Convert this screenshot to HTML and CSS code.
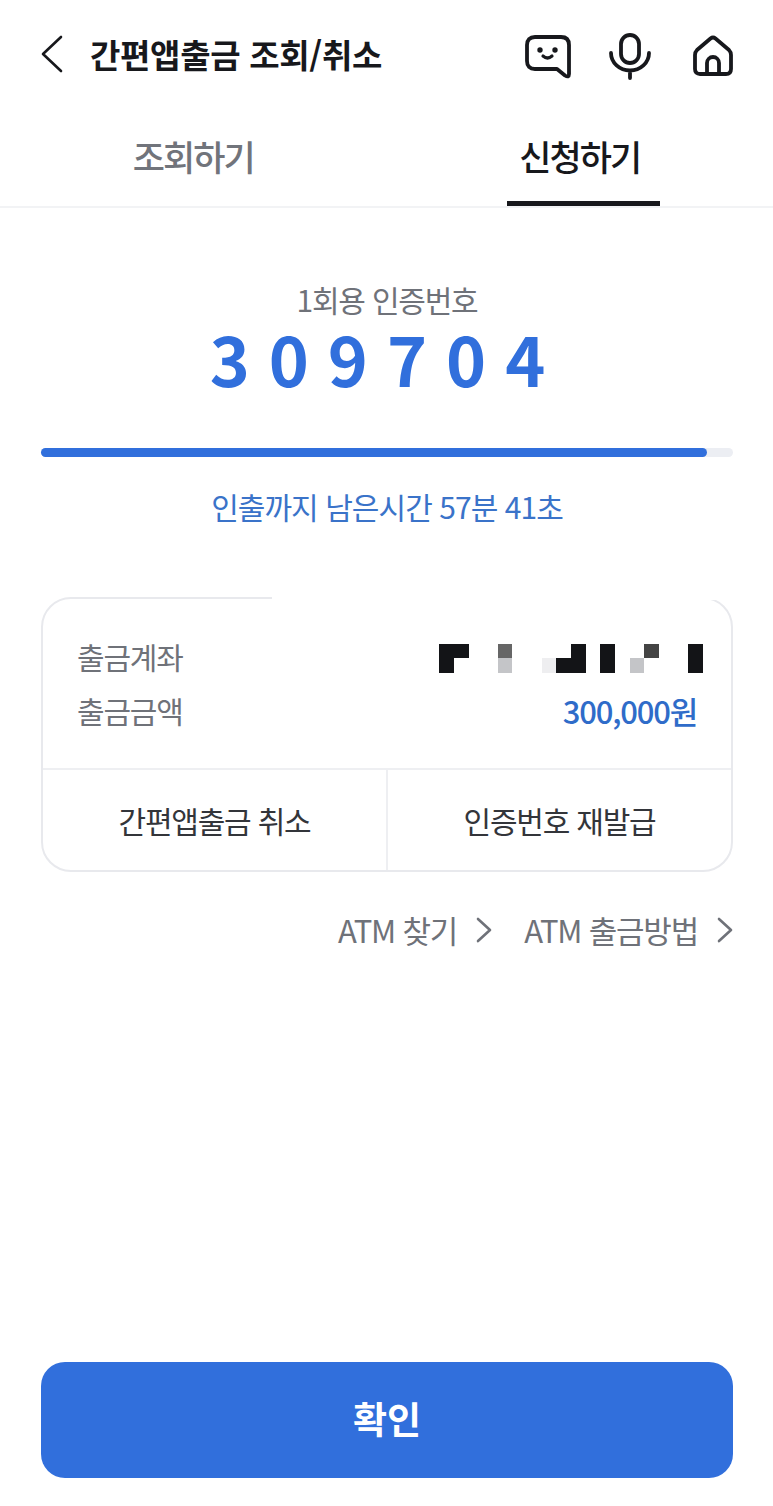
FILE: index.html
```html
<!DOCTYPE html>
<html lang="ko">
<head>
  <meta charset="UTF-8" />
  <meta name="viewport" content="width=device-width, initial-scale=1.0"/>
  <title>간편앱출금 조회/취소</title>
  <link rel="stylesheet" href="styles.css">
</head>
<body>
  <div class="page">

    <!-- Header -->
    <header class="top-bar">
      <svg class="back-icon" viewBox="0 0 24 38" width="24" height="38">
        <path d="M21 2 L3 19 L21 36" fill="none" stroke="#17181c" stroke-width="2.6" stroke-linecap="round" stroke-linejoin="round"/>
      </svg>
      <h1 class="page-title">간편앱출금 조회/취소</h1>
      <div class="top-icons">
        <svg viewBox="0 0 48 52" width="48" height="52">
          <path d="M11 9 H37 Q45 9 45 17 V46 Q45 50 41 47.5 L33 41 H11 Q3 41 3 33 V17 Q3 9 11 9 Z" fill="none" stroke="#17181c" stroke-width="3.8" stroke-linejoin="round"/>
          <circle cx="16" cy="22" r="2.7" fill="#17181c"/>
          <circle cx="31" cy="22" r="2.7" fill="#17181c"/>
          <path d="M19 28 Q23.5 32 28 28" fill="none" stroke="#17181c" stroke-width="3.2" stroke-linecap="round"/>
        </svg>
        <svg viewBox="0 0 48 52" width="48" height="52">
          <rect x="13" y="7" width="18" height="28" rx="9" fill="none" stroke="#17181c" stroke-width="3.8"/>
          <path d="M3 25 A19 17.5 0 0 0 41 25 M22 43 V50" fill="none" stroke="#17181c" stroke-width="3.8" stroke-linecap="round"/>
        </svg>
        <svg viewBox="0 0 42 52" width="42" height="52">
          <path d="M18.5 10.5 Q21 8.5 23.5 10.5 L37 22 Q39 24 39 27 V41 Q39 46 34 46 H8 Q3 46 3 41 V27 Q3 24 5 22 Z" fill="none" stroke="#17181c" stroke-width="3.8" stroke-linejoin="round"/>
          <path d="M15 46 V35 A6 6 0 0 1 27 35 V46" fill="none" stroke="#17181c" stroke-width="3.8"/>
        </svg>
      </div>
    </header>

    <!-- Tabs -->
    <nav class="tabs">
      <div class="tab">조회하기</div>
      <div class="tab tab-active">신청하기</div>
    </nav>

    <main class="content">
      <p class="code-label">1회용 인증번호</p>
      <p class="code-number">309704</p>

      <div class="progress"><div class="progress-fill" style="width: 96.2%"></div></div>
      <p class="time-left">인출까지 남은시간 57분 41초</p>

      <section class="card">
        <div class="card-gap"></div>
        <div class="card-info">
          <div class="info-row">
            <span class="info-label">출금계좌</span>
            <div class="mosaic">
              <i class="d"></i><i class="d"></i><i></i><i></i><i class="m"></i><i></i><i></i><i></i><i></i><i class="d"></i><i></i><i class="d"></i><i></i><i></i><i class="g"></i><i></i><i></i><i class="d"></i>
              <i class="d"></i><i></i><i></i><i></i><i class="l"></i><i></i><i></i><i class="f"></i><i class="d"></i><i class="d"></i><i></i><i class="d"></i><i></i><i class="l"></i><i></i><i></i><i></i><i class="d"></i>
            </div>
          </div>
          <div class="info-row">
            <span class="info-label">출금금액</span>
            <span class="info-amount">300,000원</span>
          </div>
        </div>
        <div class="card-actions">
          <div class="card-action">간편앱출금 취소</div>
          <div class="card-action">인증번호 재발급</div>
        </div>
      </section>

      <div class="links">
        <span class="link">ATM 찾기
          <svg viewBox="0 0 16 26" width="16" height="26"><path d="M2 2 L14 13 L2 24" fill="none" stroke="#6f7279" stroke-width="2.6" stroke-linecap="round" stroke-linejoin="round"/></svg>
        </span>
        <span class="link">ATM 출금방법
          <svg viewBox="0 0 16 26" width="16" height="26"><path d="M2 2 L14 13 L2 24" fill="none" stroke="#6f7279" stroke-width="2.6" stroke-linecap="round" stroke-linejoin="round"/></svg>
        </span>
      </div>
    </main>

    <button class="btn-confirm">확인</button>
  </div>
</body>
</html>
```

FILE: styles.css
```css
* {
  box-sizing: border-box;
  margin: 0;
  padding: 0;
  font-family: "Noto Sans CJK KR", "Noto Sans", sans-serif;
}

body {
  background: #fff;
  color: #17181c;
}

.page {
  width: 773px;
  height: 1506px;
  display: flex;
  flex-direction: column;
  overflow: hidden;
}

.top-bar {
  height: 108px;
  display: flex;
  align-items: center;
  padding: 0 39px 0 40px;
}

.back-icon {
  margin-right: 26px;
}

.page-title {
  font-size: 33px;
  font-weight: 700;
  letter-spacing: -0.3px;
}

.top-icons {
  margin-left: auto;
  display: flex;
  align-items: center;
  gap: 36px;
}

.tabs {
  height: 100px;
  display: flex;
  border-bottom: 2px solid #f2f3f5;
}

.tab {
  flex: 1;
  display: flex;
  justify-content: center;
  align-items: center;
  padding-bottom: 3px;
  font-size: 35px;
  font-weight: 500;
  letter-spacing: -1.9px;
  color: #71747b;
}

.tab-active {
  color: #17181c;
  position: relative;
}

.tab-active::after {
  content: "";
  position: absolute;
  left: 50%;
  bottom: 0;
  width: 153px;
  height: 5px;
  margin-left: -73px;
  background: #17181c;
}

.content {
  flex: 1;
  padding: 0 40px 0 41px;
  display: flex;
  flex-direction: column;
}

.code-label {
  margin-top: 69px;
  text-align: center;
  font-size: 30px;
  line-height: 44px;
  letter-spacing: -1.2px;
  color: #6f7279;
}

.code-number {
  text-align: center;
  font-size: 68px;
  line-height: 74px;
  font-weight: 700;
  letter-spacing: 19px;
  color: #316fdc;
}

.progress {
  margin-top: 53px;
  height: 9px;
  border-radius: 5px;
  background: #eceef3;
}

.progress-fill {
  height: 100%;
  border-radius: 5px;
  background: #316fdc;
}

.time-left {
  margin-top: 27px;
  text-align: center;
  font-size: 30px;
  line-height: 44px;
  letter-spacing: -0.95px;
  color: #3a73c9;
}

.card {
  position: relative;
  margin-top: 69px;
  height: 275px;
  border: 2px solid #e8e9ed;
  border-radius: 30px;
  display: flex;
  flex-direction: column;
}

/* top edge of the card fades out in the reference */
.card-gap {
  position: absolute;
  top: -2px;
  left: 229px;
  right: 10px;
  height: 3px;
  background: #fff;
}

.card-info {
  flex: 1;
  padding: 37px 34px 0;
  display: flex;
  flex-direction: column;
  gap: 14px;
  border-bottom: 2px solid #eeeff2;
}

.info-row {
  height: 40px;
  display: flex;
  justify-content: space-between;
  align-items: center;
}

.info-label {
  font-size: 30px;
  letter-spacing: -1.2px;
  color: #6f7279;
}

.info-amount {
  font-size: 31px;
  font-weight: 500;
  letter-spacing: -1.2px;
  color: #2f6cc9;
}

.mosaic {
  display: grid;
  grid-template-columns: repeat(18, 14.67px);
  grid-auto-rows: 14.5px;
  margin: 4px -6px 0 0;
}

.mosaic .d { background: #131417; }
.mosaic .m { background: #666; }
.mosaic .g { background: #444; }
.mosaic .l { background: #c4c5c8; }
.mosaic .f { background: #eeeef0; }

.card-actions {
  height: 100px;
  display: flex;
}

.card-action {
  flex: 1;
  display: flex;
  justify-content: center;
  align-items: center;
  font-size: 30px;
  letter-spacing: -1.2px;
  color: #33353a;
}

.card-action + .card-action {
  border-left: 2px solid #eeeff2;
}

.links {
  margin-top: 36px;
  display: flex;
  justify-content: flex-end;
  gap: 32px;
}

.link {
  display: flex;
  align-items: center;
  gap: 19px;
  font-size: 31px;
  line-height: 44px;
  letter-spacing: -1.2px;
  color: #6f7279;
}

.btn-confirm {
  margin: 0 40px 28px 41px;
  height: 116px;
  border: none;
  border-radius: 24px;
  background: #316fdc;
  color: #fff;
  font-size: 37px;
  font-weight: 700;
  padding-bottom: 4px;
}
```
